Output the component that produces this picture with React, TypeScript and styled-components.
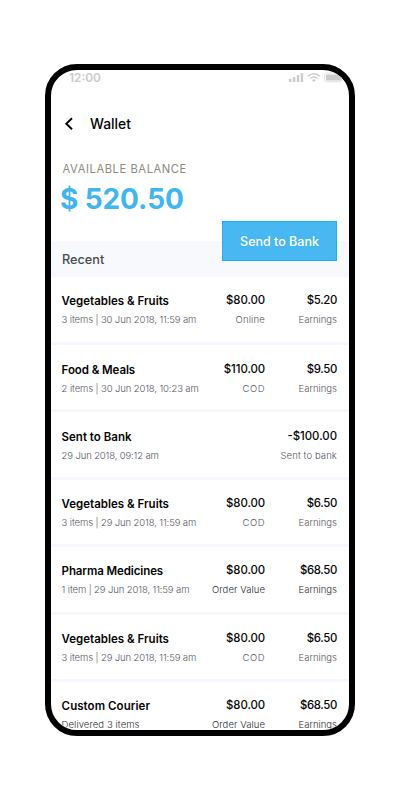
import React from 'react';
import styled, { createGlobalStyle } from 'styled-components';

const GlobalStyle = createGlobalStyle`
  * { box-sizing: border-box; }
  body {
    margin: 0;
    background: #fff;
    font-family: Inter, "Liberation Sans", sans-serif;
    color: #050505;
  }
`;

const Page = styled.main`
  height: 800px;
  display: flex;
  justify-content: center;
  padding-top: 64px;
  overflow: hidden;
`;

const Phone = styled.div`
  width: 310px;
  height: 672px;
  border: 6px solid #000;
  border-radius: 32px;
  background: #fff;
  overflow: hidden;
`;

const StatusBar = styled.div`
  height: 15px;
  display: flex;
  justify-content: space-between;
  padding: 0 7px 0 18px;
  color: #cbcbcb;
`;

const Clock = styled.span`
  font-size: 11.9px;
  font-weight: 600;
  line-height: 16px;
`;

const StatusIcons = styled.svg`
  width: 56px;
  height: 15px;
`;

const NavBar = styled.header`
  height: 50px;
  margin-top: 14px;
  display: flex;
  align-items: center;
  padding: 0 13px;
  gap: 16px;
`;

const BackIcon = styled.svg`
  width: 10px;
  height: 14px;
`;

const Title = styled.h1`
  margin: 0;
  font-size: 13.9px;
  font-weight: 450;
  line-height: 20px;
`;

const Balance = styled.section`
  height: 92px;
  padding: 12px 9px 0;
`;

const BalanceLabel = styled.div`
  padding-left: 2.6px;
  font-size: 11.2px;
  line-height: 16px;
  letter-spacing: 0.57px;
  color: #8b8b80;
`;

const BalanceAmount = styled.div`
  font-size: 28px;
  font-weight: 700;
  line-height: 36px;
  margin-top: 4px;
  letter-spacing: -0.1px;
  color: #3fb5f1;
`;

const RecentBar = styled.div`
  height: 36px;
  display: flex;
  justify-content: space-between;
  padding: 0 12px 0 11px;
  background: #f7f9fd;
`;

const RecentLabel = styled.h2`
  margin: 0;
  font-size: 12.7px;
  font-weight: 450;
  line-height: 38px;
  color: #484a50;
`;

const SendButton = styled.button`
  width: 115px;
  height: 40px;
  margin-top: -20.4px;
  padding: 1px 0 0;
  border: 1px solid #18b2f6;
  background: #47b8f1;
  color: #fff;
  font: 450 12.5px/38px Inter, sans-serif;
`;

const List = styled.ul`
  margin: 0;
  padding: 0;
  list-style: none;
`;

const Row = styled.li<{ $top: number }>`
  height: 67.5px;
  display: grid;
  grid-template-columns: 1fr 66px 72px;
  align-content: start;
  padding: ${(p) => p.$top}px 12px 0 10.6px;
  border-bottom: 3px solid #f7f8fd;
`;

const Cell = styled.div<{ $end?: boolean }>`
  display: flex;
  flex-direction: column;
  align-items: ${(p) => (p.$end ? 'flex-end' : 'flex-start')};
  white-space: nowrap;
`;

const Name = styled.span<{ $track?: number }>`
  font-size: 11.5px;
  font-weight: 600;
  line-height: 18px;
  letter-spacing: ${(p) => p.$track ?? 0}px;
`;

const Amount = styled.span<{ $track?: number }>`
  font-size: 11.4px;
  font-weight: 500;
  line-height: 16px;
  margin-bottom: 2px;
  letter-spacing: ${(p) => p.$track ?? -0.08}px;
`;

const Note = styled.span<{ $track?: number; $dark?: boolean }>`
  font-size: 9.5px;
  font-weight: 300;
  line-height: 19px;
  letter-spacing: ${(p) => p.$track ?? 0}px;
  color: ${(p) => (p.$dark ? '#2c2c31' : '#55565f')};
`;

type Text = [text: string, track?: number];
interface Entry {
  top: number;
  name: Text;
  detail: Text;
  value?: Text;
  kind?: Text;
  total: Text;
  totalKind: Text;
  darkDetail?: boolean;
  darkKind?: boolean;
}

const earnings: Text = ['Earnings'];
const cod: Text = ['COD', 0.5];
const orderValue: Text = ['Order Value', 0.07];
const groceries: Text = ['Vegetables & Fruits'];
const groceriesDetail: Text = ['3 items | 29 Jun 2018, 11:59 am', -0.11];

const entries: Entry[] = [
  { top: 14.5, name: groceries, detail: ['3 items | 30 Jun 2018, 11:59 am', -0.11], value: ['$80.00'], kind: ['Online', 0.2], total: ['$5.20', -0.35], totalKind: earnings },
  { top: 16, name: ['Food & Meals', -0.08], detail: ['2 items | 30 Jun 2018, 10:23 am', -0.11], value: ['$110.00'], kind: cod, total: ['$9.50', -0.35], totalKind: earnings },
  { top: 15.5, name: ['Sent to Bank'], detail: ['29 Jun 2018, 09:12 am', -0.13], total: ['-$100.00', 0], totalKind: ['Sent to bank', 0.1] },
  { top: 15, name: groceries, detail: groceriesDetail, value: ['$80.00'], kind: cod, total: ['$6.50', -0.35], totalKind: earnings },
  { top: 15, name: ['Pharma Medicines', -0.1], detail: ['1 item | 29 Jun 2018, 11:59 am', -0.11], value: ['$80.00'], kind: orderValue, total: ['$68.50', -0.35], totalKind: earnings, darkKind: true },
  { top: 15, name: groceries, detail: groceriesDetail, value: ['$80.00'], kind: cod, total: ['$6.50', -0.35], totalKind: earnings },
  { top: 14.5, name: ['Custom Courier', 0.06], detail: ['Delivered 3 items', 0.08], value: ['$80.00'], kind: orderValue, total: ['$68.50', -0.35], totalKind: earnings, darkDetail: true, darkKind: true },
];

function Transaction({ entry: e }: { entry: Entry }) {
  return (
    <Row $top={e.top}>
      <Cell>
        <Name $track={e.name[1]}>{e.name[0]}</Name>
        <Note $track={e.detail[1]} $dark={e.darkDetail}>{e.detail[0]}</Note>
      </Cell>
      <Cell $end>
        {e.value && <Amount $track={e.value[1]}>{e.value[0]}</Amount>}
        {e.kind && <Note $track={e.kind[1]} $dark={e.darkKind}>{e.kind[0]}</Note>}
      </Cell>
      <Cell $end>
        <Amount $track={e.total[1]}>{e.total[0]}</Amount>
        <Note $track={e.totalKind[1]} $dark={e.darkKind}>{e.totalKind[0]}</Note>
      </Cell>
    </Row>
  );
}

export default function App() {
  return (
    <>
      <GlobalStyle />
      <Page>
        <Phone>
          <StatusBar>
            <Clock>12:00</Clock>
            <StatusIcons viewBox="0 0 56 15">
              <g fill="#cbcbcb">
                <rect x="3" y="8.7" width="2.4" height="3.3" rx=".6" />
                <rect x="6.9" y="7" width="2.4" height="5" rx=".6" />
                <rect x="10.8" y="5" width="2.4" height="7" rx=".6" />
                <rect x="14.7" y="3" width="2.4" height="9" rx=".6" />
                <rect x="39.9" y="4.4" width="15.5" height="6" rx="1" />
              </g>
              <rect x="38.5" y="3" width="17.3" height="8.8" rx="2" fill="none" stroke="#dedede" strokeWidth=".9" />
              <g fill="none" stroke="#cbcbcb" strokeWidth="1.5">
                <path d="M22.1 6.1q5.8-4.8 11.6 0M24.2 8.5q3.7-3 7.4 0" />
              </g>
              <path d="M25.9 10.1q2-1.5 4 0l-2 2z" fill="#cbcbcb" />
            </StatusIcons>
          </StatusBar>
          <NavBar>
            <BackIcon viewBox="0 0 10 14" fill="none" stroke="#050505" strokeWidth="1.9">
              <path d="M8 1.2 2.3 6.7l5.7 5.5" />
            </BackIcon>
            <Title>Wallet</Title>
          </NavBar>
          <Balance>
            <BalanceLabel>AVAILABLE BALANCE</BalanceLabel>
            <BalanceAmount>$ 520.50</BalanceAmount>
          </Balance>
          <RecentBar>
            <RecentLabel>Recent</RecentLabel>
            <SendButton>Send to Bank</SendButton>
          </RecentBar>
          <List>
            {entries.map((entry, i) => (
              <Transaction key={i} entry={entry} />
            ))}
          </List>
        </Phone>
      </Page>
    </>
  );
}
